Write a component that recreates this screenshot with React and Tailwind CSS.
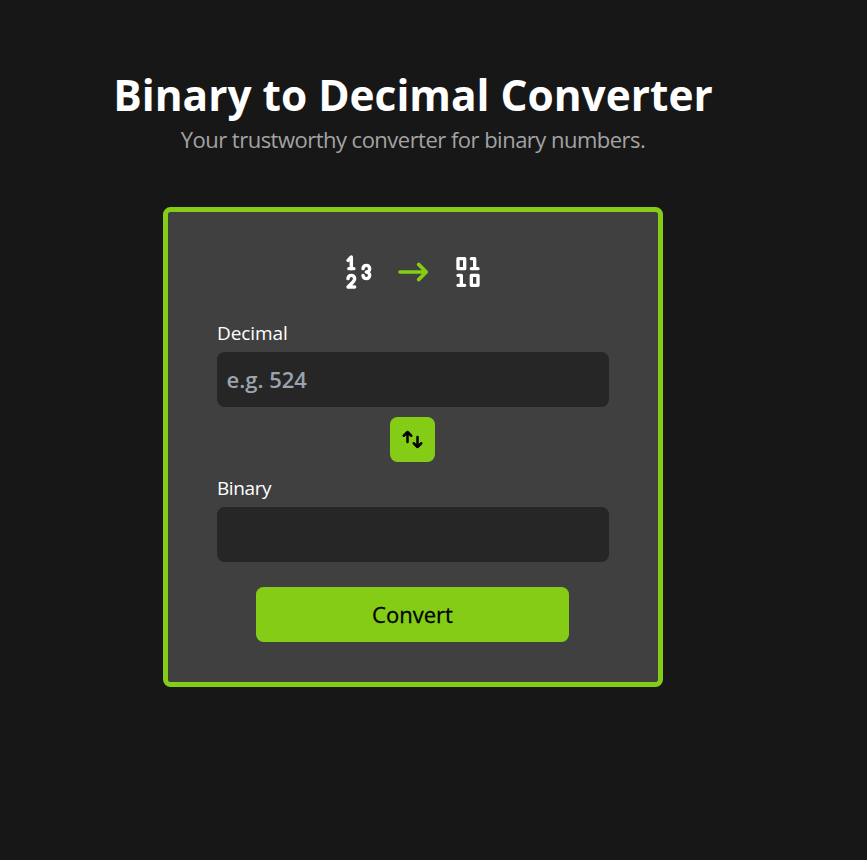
import { TbNumbers } from "react-icons/tb";

function BinaryIcon() {
  return (
    <svg width="40" height="40" viewBox="0 0 24 24" fill="none" stroke="currentColor" strokeWidth="2" strokeLinejoin="round">
      <rect x="6" y="4" width="4" height="6" />
      <rect x="14" y="14" width="4" height="6" />
      <path d="M14 4h2v6M14 10h4M6 14h2v6M6 20h4" strokeLinecap="round" />
    </svg>
  );
}

function Field({ label, placeholder, labelClass }) {
  return (
    <label className="flex w-[392px] flex-col">
      <span className={`h-[37px] text-[19px] leading-[37px] text-white ${labelClass}`}>{label}</span>
      <input
        placeholder={placeholder}
        className="h-[55px] rounded-[7.5px] bg-neutral-800 px-[9.5px] pb-[2px] text-[22px] font-semibold text-white placeholder-[#9ca3af] outline-none"
      />
    </label>
  );
}

export default function App() {
  return (
    <main className="min-h-screen w-full bg-[#171717] pt-[65px] pr-[41px] font-['Open_Sans',sans-serif]">
      <div className="flex flex-col items-center">
        <h1 className="h-[60px] whitespace-nowrap text-[42.4px] leading-[60px] font-bold text-white">Binary to Decimal Converter</h1>
        <p className="h-[30px] whitespace-nowrap text-[22px] leading-[28px] tracking-[-0.52px] text-[#a3a3a3]">Your trustworthy converter for binary numbers.</p>
        <section className="mt-[52px] flex h-[480px] w-[500px] flex-col items-center rounded-[7.5px] border-[5px] border-[#84cc16] bg-[#404040] pt-[40px]">
          <div className="flex h-[40px] items-center gap-[15px] text-white">
            <TbNumbers size={40} className="[stroke-width:2.05]" />
            <svg width="40" height="40" viewBox="0 0 40 40" fill="none" stroke="#84cc16" strokeWidth="3.6" strokeLinecap="round" strokeLinejoin="round">
              <path d="M7 20h26.3M25.6 12.4l7.7 7.6-7.7 7.6" />
            </svg>
            <BinaryIcon />
          </div>
          <div className="mt-[23px]"><Field label="Decimal" placeholder="e.g. 524" labelClass="tracking-[-0.1px]" /></div>
          <button className="mt-[10px] mr-[1px] flex size-[45px] items-center justify-center rounded-[7.5px] bg-[#84cc16]">
            <svg width="25" height="25" viewBox="0 0 20 20" fill="none" stroke="#000" strokeWidth="2" strokeLinecap="round" strokeLinejoin="round">
              <path d="M6 12V4M3 7l3-3 3 3M14 8v8M11 13l3 3 3-3" />
            </svg>
          </button>
          <div className="mt-[8px]"><Field label="Binary" labelClass="tracking-[-0.4px]" /></div>
          <button className="mt-[25px] mr-[1px] h-[55px] w-[313px] rounded-[7.5px] bg-[#84cc16] text-[22px] font-medium text-black [-webkit-text-stroke:0.3px_#000]">Convert</button>
        </section>
      </div>
    </main>
  );
}
